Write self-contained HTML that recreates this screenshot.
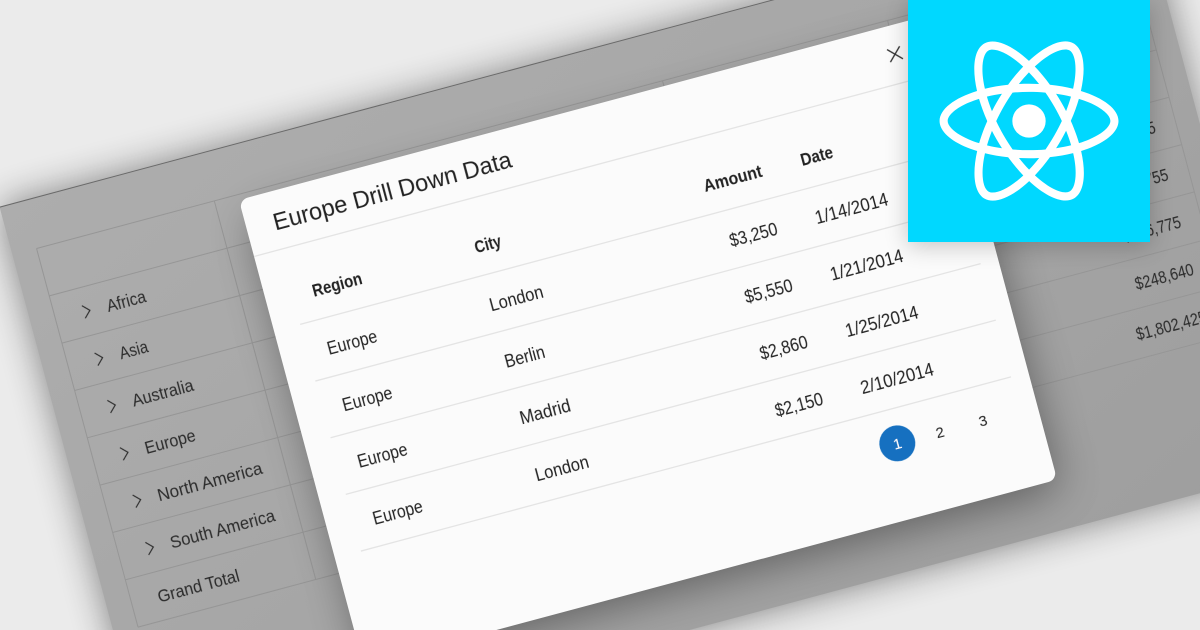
<!DOCTYPE html>
<html><head><meta charset="utf-8"><style>
html,body{margin:0;padding:0;width:1200px;height:630px;overflow:hidden;background:#ebebeb}
svg{display:block}
text{font-family:"Liberation Sans",sans-serif;font-size:18px;fill:#222}
.g text{fill:#2b2b2b;font-size:17.5px}
.b{font-weight:700;font-size:17.5px}
.p{font-size:15px}
</style></head><body>
<svg width="1200" height="630" viewBox="0 0 1200 630" xmlns="http://www.w3.org/2000/svg">
<defs>
<linearGradient id="bg" x1="0" y1="0" x2="1" y2="1"><stop offset="0" stop-color="#adadad"/><stop offset=".5" stop-color="#a6a6a6"/><stop offset="1" stop-color="#9e9e9e"/></linearGradient>
<filter id="s1" x="-10%" y="-15%" width="120%" height="130%"><feGaussianBlur stdDeviation="18"/></filter>
<filter id="s2" x="-15%" y="-15%" width="130%" height="130%"><feGaussianBlur stdDeviation="22"/></filter>
<filter id="s3" x="-20%" y="-20%" width="140%" height="140%"><feGaussianBlur stdDeviation="12"/></filter>
<filter id="soft" x="-5%" y="-5%" width="110%" height="110%"><feGaussianBlur stdDeviation="0.3"/></filter>
</defs>
<rect width="1200" height="630" fill="#ebebeb"/>
<g transform="rotate(-15)">
<rect x="-54" y="200" width="1181" height="587" fill="#000" opacity=".45" filter="url(#s1)"/>
<rect x="-54" y="200" width="1181" height="587" fill="url(#bg)"/>
<line x1="-54" y1="200" x2="1127" y2="200" stroke="#6a6a6a" stroke-width="1"/>
<g stroke="#969696" stroke-width="1" fill="none">
<path d="M-29 249.5H1104M-29 298.5H1104M-29 347.5H1104M-29 396.5H1104M-29 445.5H1104M-29 494.5H1104M-29 543.5H1104M-29 592.5H1104M-29 641.5H1104"/>
<path d="M-29 249.5V641.5M155 249.5V641.5M619 249.5V641.5M852 249.5V641.5M1104 249.5V641.5"/>
</g>
<g class="g" filter="url(#soft)">
<text x="24" y="329.500" textLength="40" lengthAdjust="spacingAndGlyphs">Africa</text>
<text x="24" y="378.500" textLength="29" lengthAdjust="spacingAndGlyphs">Asia</text>
<text x="24" y="427.500" textLength="63" lengthAdjust="spacingAndGlyphs">Australia</text>
<text x="24" y="476.500" textLength="52" lengthAdjust="spacingAndGlyphs">Europe</text>
<text x="24" y="525.500" textLength="108" lengthAdjust="spacingAndGlyphs">North America</text>
<text x="24" y="574.500" textLength="108" lengthAdjust="spacingAndGlyphs">South America</text>
<text x="-2" y="623.500" textLength="84" lengthAdjust="spacingAndGlyphs">Grand Total</text>
<text x="1023" y="427.500" textLength="60" lengthAdjust="spacingAndGlyphs">$168,725</text>
<text x="1023" y="476.500" textLength="60" lengthAdjust="spacingAndGlyphs">$402,755</text>
<text x="1023" y="525.500" textLength="60" lengthAdjust="spacingAndGlyphs">$346,775</text>
<text x="1023" y="574.500" textLength="60" lengthAdjust="spacingAndGlyphs">$248,640</text>
<text x="1011" y="623.500" textLength="72" lengthAdjust="spacingAndGlyphs">$1,802,425</text>
<g fill="none" stroke="#2b2b2b" stroke-width="1.2">
<path d="M0 316.500L6.500 323L0 329.500"/>
<path d="M0 365.500L6.500 372L0 378.500"/>
<path d="M0 414.500L6.500 421L0 427.500"/>
<path d="M0 463.500L6.500 470L0 476.500"/>
<path d="M0 512.500L6.500 519L0 525.500"/>
<path d="M0 561.500L6.500 568L0 574.500"/>
</g>
</g>
<rect x="185" y="278" width="712" height="468" rx="9" fill="#000" opacity=".4" filter="url(#s2)"/>
<rect x="179" y="255" width="718" height="482" rx="9" fill="#fbfbfb"/>
<g stroke="#e4e4e4" stroke-width="1.3">
<line x1="179" y1="313.500" x2="897" y2="313.500"/>
<line x1="206" y1="391" x2="879" y2="391"/>
<line x1="206" y1="449.700" x2="879" y2="449.700"/>
<line x1="206" y1="508.400" x2="879" y2="508.400"/>
<line x1="206" y1="567" x2="879" y2="567"/>
<line x1="206" y1="625.700" x2="879" y2="625.700"/>
</g>
<g filter="url(#soft)">
<text x="206.500" y="294" style="font-size:24px" textLength="246" lengthAdjust="spacingAndGlyphs">Europe Drill Down Data</text>
<path d="M844 277.500L857 290.500M857 277.500L844 290.500" stroke="#333" stroke-width="1.300" fill="none"/>
<text class="b" x="226.500" y="368" textLength="51" lengthAdjust="spacingAndGlyphs">Region</text>
<text class="b" x="394.500" y="368" textLength="27" lengthAdjust="spacingAndGlyphs">City</text>
<text class="b" x="631.500" y="368" textLength="60" lengthAdjust="spacingAndGlyphs">Amount</text>
<text class="b" x="732" y="368" textLength="33" lengthAdjust="spacingAndGlyphs">Date</text>
<text x="226" y="428" textLength="51" lengthAdjust="spacingAndGlyphs">Europe</text>
<text x="226" y="486.500" textLength="51" lengthAdjust="spacingAndGlyphs">Europe</text>
<text x="226" y="545" textLength="51" lengthAdjust="spacingAndGlyphs">Europe</text>
<text x="226" y="604" textLength="51" lengthAdjust="spacingAndGlyphs">Europe</text>
<text x="394" y="428" textLength="55" lengthAdjust="spacingAndGlyphs">London</text>
<text x="394" y="486.500" textLength="41" lengthAdjust="spacingAndGlyphs">Berlin</text>
<text x="394" y="545" textLength="52" lengthAdjust="spacingAndGlyphs">Madrid</text>
<text x="394" y="604" textLength="55" lengthAdjust="spacingAndGlyphs">London</text>
<text x="642.500" y="428" textLength="49" lengthAdjust="spacingAndGlyphs">$3,250</text>
<text x="642.500" y="486.500" textLength="49" lengthAdjust="spacingAndGlyphs">$5,550</text>
<text x="642.500" y="545" textLength="49" lengthAdjust="spacingAndGlyphs">$2,860</text>
<text x="642.500" y="604" textLength="49" lengthAdjust="spacingAndGlyphs">$2,150</text>
<text x="731" y="428" textLength="75" lengthAdjust="spacingAndGlyphs">1/14/2014</text>
<text x="731" y="486.500" textLength="75" lengthAdjust="spacingAndGlyphs">1/21/2014</text>
<text x="731" y="545" textLength="75" lengthAdjust="spacingAndGlyphs">1/25/2014</text>
<text x="731" y="604" textLength="75" lengthAdjust="spacingAndGlyphs">2/10/2014</text>
<circle cx="752" cy="660.500" r="18" fill="#1470c0"/>
<text class="p" x="752" y="666" text-anchor="middle" style="fill:#fff">1</text>
<text class="p" x="796" y="666" text-anchor="middle">2</text>
<text class="p" x="840.500" y="666" text-anchor="middle">3</text>
</g>
</g>
<rect x="908" y="4" width="242" height="242" fill="#000" opacity=".22" filter="url(#s3)"/>
<rect x="908" y="0" width="242" height="242" fill="#00d8ff"/>
<g transform="translate(1029 121) scale(.3647) translate(-420.9 -296.5)" fill="#fff">
<path d="M666.3 296.5c0-32.5-40.7-63.3-103.1-82.4 14.4-63.6 8-114.2-20.2-130.4-6.5-3.8-14.1-5.6-22.4-5.6v22.3c4.6 0 8.3.9 11.4 2.6 13.6 7.8 19.5 37.5 14.9 75.7-1.1 9.4-2.9 19.3-5.1 29.4-19.6-4.8-41-8.5-63.5-10.9-13.5-18.5-27.5-35.3-41.6-50 32.6-30.3 63.2-46.9 84-46.9V78c-27.5 0-63.5 19.6-99.9 53.6-36.4-33.8-72.4-53.2-99.9-53.2v22.3c20.7 0 51.4 16.5 84 46.6-14 14.7-28 31.4-41.3 49.9-22.6 2.4-44 6.1-63.6 11-2.3-10-4-19.7-5.2-29-4.7-38.2 1.1-67.9 14.6-75.8 3-1.8 6.9-2.6 11.5-2.6V78.500c-8.400 0-16 1.800-22.600 5.600-28.100 16.200-34.400 66.700-19.900 130.100-62.200 19.200-102.700 49.900-102.700 82.300 0 32.500 40.700 63.300 103.100 82.400-14.400 63.600-8 114.200 20.200 130.400 6.500 3.800 14.100 5.600 22.500 5.600 27.500 0 63.500-19.600 99.900-53.600 36.400 33.800 72.400 53.200 99.900 53.200 8.400 0 16-1.800 22.600-5.600 28.100-16.200 34.400-66.700 19.900-130.100 62-19.100 102.500-49.900 102.500-82.300zm-130.200-66.700c-3.700 12.900-8.300 26.200-13.500 39.500-4.100-8-8.400-16-13.100-24-4.600-8-9.500-15.800-14.400-23.400 14.200 2.100 27.900 4.700 41 7.900zm-45.800 106.500c-7.800 13.500-15.800 26.300-24.100 38.200-14.900 1.300-30 2-45.200 2-15.100 0-30.200-.7-45-1.900-8.300-11.900-16.400-24.600-24.200-38-7.600-13.100-14.500-26.400-20.800-39.800 6.200-13.400 13.200-26.800 20.700-39.900 7.800-13.500 15.800-26.300 24.100-38.200 14.900-1.300 30-2 45.200-2 15.100 0 30.200.7 45 1.900 8.300 11.900 16.400 24.600 24.200 38 7.600 13.100 14.500 26.400 20.800 39.800-6.300 13.400-13.200 26.800-20.700 39.900zm32.300-13c5.400 13.400 10 26.800 13.800 39.800-13.100 3.200-26.900 5.900-41.2 8 4.900-7.700 9.800-15.600 14.400-23.700 4.600-8 8.900-16.100 13-24.100zM421.200 430c-9.300-9.600-18.600-20.300-27.800-32 9 .4 18.200.7 27.500.7 9.400 0 18.700-.2 27.800-.7-9 11.700-18.300 22.400-27.500 32zm-74.400-58.900c-14.200-2.100-27.900-4.700-41-7.900 3.700-12.900 8.300-26.200 13.500-39.500 4.100 8 8.400 16 13.100 24 4.700 8 9.500 15.800 14.400 23.400zM420.700 163c9.300 9.600 18.600 20.300 27.800 32-9-.4-18.200-.7-27.500-.7-9.400 0-18.700.2-27.800.7 9-11.700 18.300-22.400 27.500-32zm-74 58.900c-4.900 7.700-9.800 15.600-14.400 23.700-4.600 8-8.900 16-13 24-5.400-13.400-10-26.800-13.800-39.800 13.100-3.100 26.900-5.800 41.200-7.900zm-90.500 125.200c-35.400-15.100-58.300-34.900-58.300-50.600 0-15.700 22.900-35.600 58.300-50.600 8.600-3.700 18-7 27.700-10.100 5.700 19.600 13.200 40 22.500 60.900-9.200 20.800-16.600 41.100-22.200 60.600-9.900-3.100-19.300-6.500-28-10.200zM310 490c-13.600-7.800-19.500-37.500-14.900-75.700 1.100-9.400 2.900-19.300 5.100-29.400 19.600 4.800 41 8.500 63.500 10.900 13.500 18.500 27.500 35.300 41.600 50-32.600 30.300-63.200 46.900-84 46.900-4.500-.1-8.300-1-11.300-2.700zm237.200-76.200c4.700 38.200-1.100 67.900-14.600 75.800-3 1.800-6.900 2.600-11.500 2.600-20.700 0-51.400-16.500-84-46.600 14-14.700 28-31.400 41.300-49.900 22.600-2.400 44-6.100 63.600-11 2.300 10.100 4.100 19.800 5.200 29.100zm38.500-66.700c-8.600 3.700-18 7-27.700 10.100-5.700-19.600-13.200-40-22.500-60.900 9.200-20.800 16.600-41.100 22.200-60.600 9.900 3.100 19.300 6.500 28.100 10.200 35.400 15.100 58.300 34.900 58.300 50.600-.1 15.700-23 35.600-58.400 50.600z"/>
<circle cx="420.900" cy="296.500" r="45.700"/>
</g>
</svg>
</body></html>
